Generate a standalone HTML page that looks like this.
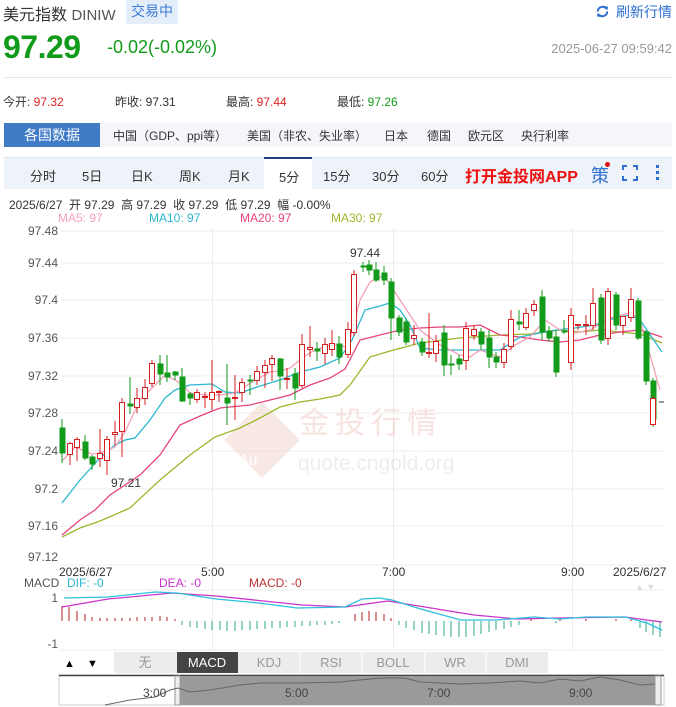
<!DOCTYPE html>
<html><head><meta charset="utf-8"><style>
*{margin:0;padding:0;box-sizing:border-box}
body{width:676px;height:707px;background:#fff;font-family:"Liberation Sans","Noto Sans CJK SC",sans-serif;position:relative;overflow:hidden;color:#333}
.a{position:absolute;white-space:nowrap}
</style></head><body>
<div class="a" style="left:3px;top:1px;font-size:16px;color:#333">美元指数 <span style="font-size:15px;color:#555">DINIW</span></div>
<div class="a" style="left:126px;top:0;width:52px;height:24px;background:#e4eefa;color:#3a7bd5;font-size:14px;line-height:22px;text-align:center">交易中</div>
<svg class="a" style="left:595px;top:4px" width="15" height="15" viewBox="0 0 16 16"><path d="M3 8a5 5 0 0 1 9-3" stroke="#2f6fcf" stroke-width="2.2" fill="none"/><path d="M13 8a5 5 0 0 1-9 3" stroke="#2f6fcf" stroke-width="2.2" fill="none"/><path d="M10 2l4 1-1 4z" fill="#2f6fcf"/><path d="M6 14l-4-1 1-4z" fill="#2f6fcf"/></svg>
<div class="a" style="left:616px;top:2px;font-size:14px;color:#2f6fcf">刷新行情</div>
<div class="a" style="left:3px;top:29px;font-size:32px;font-weight:bold;color:#129a1a;letter-spacing:-0.5px">97.29</div>
<div class="a" style="left:107px;top:37px;font-size:18px;color:#129a1a">-0.02(-0.02%)</div>
<div class="a" style="right:4px;top:41px;font-size:13px;color:#999">2025-06-27 09:59:42</div>
<div class="a" style="left:4px;top:77px;width:668px;height:1px;background:#e5e5e5"></div>
<div class="a" style="left:3px;top:93px;font-size:12px;color:#333">今开: <span style="color:#e02020">97.32</span></div>
<div class="a" style="left:115px;top:93px;font-size:12px;color:#333">昨收: 97.31</div>
<div class="a" style="left:226px;top:93px;font-size:12px;color:#333">最高: <span style="color:#e02020">97.44</span></div>
<div class="a" style="left:337px;top:93px;font-size:12px;color:#333">最低: <span style="color:#129a1a">97.26</span></div>
<div class="a" style="left:4px;top:123px;width:668px;height:24px;background:#f4f6f9"></div>
<div class="a" style="left:4px;top:123px;width:96px;height:24px;background:#3f7bc6;color:#fff;font-size:14px;line-height:24px;text-align:center">各国数据</div>
<div class="a" style="left:113px;top:127px;font-size:12px;color:#333">中国（GDP、ppi等）</div>
<div class="a" style="left:247px;top:127px;font-size:12px;color:#333">美国（非农、失业率）</div>
<div class="a" style="left:384px;top:127px;font-size:12px;color:#333">日本</div>
<div class="a" style="left:427px;top:127px;font-size:12px;color:#333">德国</div>
<div class="a" style="left:468px;top:127px;font-size:12px;color:#333">欧元区</div>
<div class="a" style="left:521px;top:127px;font-size:12px;color:#333">央行利率</div>
<div class="a" style="left:4px;top:157px;width:668px;height:32px;background:#eef3fa;border-top:1px solid #dde6f2"></div>
<div class="a" style="left:264px;top:157px;width:48px;height:33px;background:#fff;border-top:2px solid #1f3f7a"></div>
<div class="a" style="left:0;top:166px;font-size:13px;color:#333;width:676px">
<span class="a" style="left:30px">分时</span><span class="a" style="left:82px">5日</span><span class="a" style="left:131px">日K</span><span class="a" style="left:179px">周K</span><span class="a" style="left:228px">月K</span><span class="a" style="left:279px;top:1px">5分</span><span class="a" style="left:323px">15分</span><span class="a" style="left:372px">30分</span><span class="a" style="left:421px">60分</span></div>
<div class="a" style="left:465px;top:163px;font-size:16px;font-weight:bold;color:#f01010">打开金投网APP</div>
<div class="a" style="left:591px;top:162px;font-size:18px;color:#2f6fcf">策</div>
<div class="a" style="left:605px;top:162px;width:5px;height:5px;border-radius:50%;background:#e01010"></div>
<svg class="a" style="left:622px;top:165px" width="16" height="16"><path d="M1 5V1h4M11 1h4v4M15 11v4h-4M5 15H1v-4" stroke="#2f6fcf" stroke-width="2" fill="none"/></svg>
<div class="a" style="left:656px;top:165px;width:3px;height:3px;background:#2f6fcf;box-shadow:0 6px 0 #2f6fcf,0 12px 0 #2f6fcf"></div>
<div class="a" style="left:9px;top:196px;font-size:12px;color:#333">2025/6/27 &nbsp;开 97.29 &nbsp;高 97.29 &nbsp;收 97.29 &nbsp;低 97.29 &nbsp;幅 -0.00%</div>
<div class="a" style="left:58px;top:211px;font-size:12px;color:#f4a0b8">MA5: 97</div>
<div class="a" style="left:149px;top:211px;font-size:12px;color:#2cb8cf">MA10: 97</div>
<div class="a" style="left:240px;top:211px;font-size:12px;color:#e8447a">MA20: 97</div>
<div class="a" style="left:331px;top:211px;font-size:12px;color:#9cb82c">MA30: 97</div>

<svg class="a" style="left:0;top:0" width="676" height="707" font-family="Liberation Sans, sans-serif">
<g stroke="#ececec" stroke-width="1">
<line x1="60" y1="231" x2="664" y2="231"/><line x1="60" y1="263" x2="664" y2="263"/><line x1="60" y1="300" x2="664" y2="300"/><line x1="60" y1="338" x2="664" y2="338"/><line x1="60" y1="376" x2="664" y2="376"/><line x1="60" y1="413" x2="664" y2="413"/><line x1="60" y1="451" x2="664" y2="451"/><line x1="60" y1="489" x2="664" y2="489"/><line x1="60" y1="526" x2="664" y2="526"/><line x1="60" y1="565" x2="664" y2="565"/>
<line x1="212.5" y1="228" x2="212.5" y2="650"/><line x1="393.5" y1="228" x2="393.5" y2="650"/><line x1="572.5" y1="228" x2="572.5" y2="650"/>
<line x1="60" y1="590" x2="664" y2="590"/><line x1="60" y1="650" x2="664" y2="650"/>
</g>
<g font-size="12" fill="#555" text-anchor="end">
<text x="58" y="235">97.48</text><text x="58" y="267">97.44</text><text x="58" y="304">97.4</text><text x="58" y="342">97.36</text><text x="58" y="380">97.32</text><text x="58" y="417">97.28</text><text x="58" y="455">97.24</text><text x="58" y="493">97.2</text><text x="58" y="530">97.16</text><text x="58" y="561">97.12</text>
</g>
<!-- watermark -->
<g opacity="0.5">
<path d="M262 402 L300 440 L262 478 L224 440 Z" fill="#f2d4cc"/>
<text x="238" y="465" font-size="16" fill="#fff">Au</text>
<text x="299" y="433" font-size="30" fill="#f0c8c0" font-family="Noto Sans CJK SC, sans-serif" letter-spacing="6">金投行情</text>
<text x="298" y="470" font-size="21" fill="#dcdcdc">quote.cngold.org</text>
</g>
<!-- MAs -->
<g fill="none" stroke-width="1.3">
<polyline stroke="#9cb82c" points="62,537 80,528 100,521 130,508 160,480 190,455 215,437 240,428 260,418 280,407 300,402 320,399 340,395 350,385 370,357 390,351 420,343 460,338 500,335 530,334 560,330 580,332 600,330 620,332 640,334 662,343"/>
<polyline stroke="#e8447a" points="62,535 80,520 95,510 110,495 140,475 160,455 180,425 200,416 220,408 250,405 270,400 290,395 310,385 330,378 345,369 360,340 380,335 400,330 420,328 440,327 460,327 480,325 500,335 520,337 540,340 560,342 580,340 600,335 620,332 640,330 662,337"/>
<polyline stroke="#2cb8cf" points="62,503 80,480 100,458 115,445 125,440 135,438 150,420 165,398 175,390 190,385 212,384 225,392 240,393 260,386 280,380 300,372 320,367 340,358 352,340 365,310 380,306 390,303 400,310 410,325 420,348 440,350 460,350 480,350 500,350 520,337 540,333 556,330 575,328 595,325 615,318 630,315 640,320 662,352"/>
<polyline stroke="#f4a0b8" points="62,461 75,447 92,454 100,453 115,447 125,432 140,400 150,390 165,375 175,380 183,385 190,393 205,395 220,395 235,393 255,380 270,372 280,371 290,368 305,356 315,350 330,345 340,345 348,348 360,300 370,282 384,275 400,300 420,330 440,345 460,355 470,357 480,350 500,357 515,345 530,337 545,320 560,330 575,333 590,330 610,318 630,313 640,320 660,390"/>
</g>
<!-- candles: green -->
<g stroke="#129a1a" fill="#129a1a">
<path d="M62 419V463M85 435V460M92 455V470M130 377V414M160 355V385M167 355V382M175 371V380M182 368V402M190 392V405M227 364V425M250 375V395M280 358V390M295 368V400M317 342V361M339 336V364M363 262V272M369 260V275M376 262V282M384 266V285M391 278V340M399 315V336M406 318V345M422 338V356M444 325V376M451 355V375M459 355V370M481 328V350M489 330V368M496 352V368M519 310V330M542 290V340M549 326V342M556 330V377M564 320V334M601 294V344M616 292V330M638 298V340M646 330V385M653 378V427"/>
<rect x="60" y="428" width="5" height="25"/><rect x="83" y="442" width="5" height="16"/><rect x="90" y="457" width="5" height="7"/><rect x="128" y="404" width="5" height="2"/><rect x="158" y="364" width="5" height="10"/><rect x="165" y="373" width="5" height="4"/><rect x="173" y="372" width="5" height="3"/><rect x="180" y="377" width="5" height="24"/><rect x="188" y="394" width="5" height="4"/><rect x="225" y="398" width="5" height="5"/><rect x="248" y="380" width="5" height="1"/><rect x="278" y="359" width="5" height="17"/><rect x="293" y="374" width="5" height="14"/><rect x="315" y="349" width="5" height="2"/><rect x="337" y="344" width="5" height="13"/><rect x="361" y="266" width="5" height="1"/><rect x="367" y="265" width="5" height="5"/><rect x="374" y="270" width="5" height="10"/><rect x="382" y="273" width="5" height="7"/><rect x="389" y="282" width="5" height="36"/><rect x="397" y="318" width="5" height="14"/><rect x="404" y="322" width="5" height="20"/><rect x="420" y="342" width="5" height="10"/><rect x="442" y="333" width="5" height="32"/><rect x="449" y="364" width="5" height="1"/><rect x="457" y="359" width="5" height="5"/><rect x="479" y="332" width="5" height="12"/><rect x="487" y="338" width="5" height="19"/><rect x="494" y="357" width="5" height="5"/><rect x="517" y="322" width="5" height="2"/><rect x="540" y="297" width="5" height="35"/><rect x="547" y="331" width="5" height="7"/><rect x="554" y="337" width="5" height="35"/><rect x="562" y="331" width="5" height="1"/><rect x="599" y="298" width="5" height="42"/><rect x="614" y="295" width="5" height="30"/><rect x="636" y="301" width="5" height="37"/><rect x="644" y="332" width="5" height="49"/><rect x="651" y="381" width="5" height="38"/>
</g>
<!-- red -->
<g stroke="#d42020" fill="#fff">
<path d="M70 442V465M77 437V461M100 429V467M107 436V475M115 421V445M122 398V457M137 388V413M145 379V405M152 360V387M197 389V403M205 392V408M212 360V410M219 390V402M235 375V420M242 378V402M257 366V385M265 360V388M272 355V381M287 368V389M302 334V388M310 326V357M325 338V364M332 330V356M348 322V358M354 270V336M414 325V345M429 313V358M436 335V362M466 322V370M474 325V340M504 343V368M511 310V350M526 308V330M534 300V316M571 308V370M578 325V330M586 315V335M593 288V330M608 288V345M623 318V335M631 288V322M653 396V426"/>
<rect x="67.5" y="443.5" width="5" height="11"/><rect x="74.5" y="439.5" width="5" height="8"/><rect x="97.5" y="453.5" width="5" height="5"/><rect x="104.5" y="439.5" width="5" height="21"/><rect x="112.5" y="432.5" width="5" height="2"/><rect x="119.5" y="402.5" width="5" height="29"/><rect x="134.5" y="398.5" width="5" height="9"/><rect x="142.5" y="387.5" width="5" height="11"/><rect x="149.5" y="363.5" width="5" height="20"/><rect x="194.5" y="392.5" width="5" height="7"/><rect x="202.5" y="396.5" width="5" height="1"/><rect x="209.5" y="392.5" width="5" height="7"/><rect x="216.5" y="391.5" width="5" height="1"/><rect x="232.5" y="397.5" width="5" height="1"/><rect x="239.5" y="382.5" width="5" height="10"/><rect x="254.5" y="371.5" width="5" height="9"/><rect x="262.5" y="365.5" width="5" height="7"/><rect x="269.5" y="358.5" width="5" height="6"/><rect x="284.5" y="378.5" width="5" height="1"/><rect x="299.5" y="344.5" width="5" height="41"/><rect x="307.5" y="347.5" width="5" height="2"/><rect x="322.5" y="344.5" width="5" height="9"/><rect x="329.5" y="343.5" width="5" height="6"/><rect x="345.5" y="329.5" width="5" height="25"/><rect x="351.5" y="274.5" width="5" height="58"/><rect x="411.5" y="335.5" width="5" height="3"/><rect x="426.5" y="352.5" width="5" height="1"/><rect x="433.5" y="341.5" width="5" height="12"/><rect x="463.5" y="328.5" width="5" height="32"/><rect x="471.5" y="329.5" width="5" height="6"/><rect x="501.5" y="349.5" width="5" height="13"/><rect x="508.5" y="319.5" width="5" height="27"/><rect x="523.5" y="313.5" width="5" height="14"/><rect x="531.5" y="304.5" width="5" height="6"/><rect x="568.5" y="315.5" width="5" height="47"/><rect x="575.5" y="324.5" width="5" height="1"/><rect x="583.5" y="324.5" width="5" height="1"/><rect x="590.5" y="303.5" width="5" height="22"/><rect x="605.5" y="291.5" width="5" height="47"/><rect x="620.5" y="316.5" width="5" height="9"/><rect x="628.5" y="299.5" width="5" height="18"/><rect x="650.5" y="398.5" width="5" height="26"/>
</g>
<line x1="659" y1="402" x2="664" y2="402" stroke="#333"/>
<text x="350" y="257" font-size="12" fill="#333">97.44</text>
<text x="111" y="487" font-size="12" fill="#333">97.21</text>
<g font-size="12" fill="#333">
<text x="59" y="576">2025/6/27</text><text x="201" y="576">5:00</text><text x="382" y="576">7:00</text><text x="561" y="576">9:00</text><text x="613" y="576">2025/6/27</text>
</g>
<text x="24" y="587" font-size="12" fill="#555">MACD</text>
<text x="67" y="587" font-size="12" fill="#2cb8cf">DIF: -0</text>
<text x="159" y="587" font-size="12" fill="#cc33cc">DEA: -0</text>
<text x="249" y="587" font-size="12" fill="#c03030">MACD: -0</text>
<text x="635" y="590" font-size="9" fill="#ddd">▲ ▼</text>
<text x="58" y="602" font-size="12" fill="#555" text-anchor="end">1</text>
<text x="58" y="648" font-size="12" fill="#555" text-anchor="end">-1</text>
<!-- histogram -->
<g stroke="#b02020" stroke-width="1">
<path d="M62 606V621M69 607V621M77 611V621M85 614V621M92 617V621M100 618V621M107 618V621M115 618V621M122 618V621M130 618V621M137 617V621M145 617V621M152 617V621M160 616V621M167 617V621M175 619V621M355 614V621M362 612V621M369 611V621M376 612V621M384 614V621M391 618V621M531 619V621M560 619V621M586 619V621M616 619V621M631 619V621"/>
</g>
<g stroke="#2aa888" stroke-width="1">
<path d="M182 621V625M190 621V627M197 621V628M205 621V629M212 621V630M220 621V630M227 621V631M235 621V631M242 621V630M250 621V630M257 621V629M265 621V629M272 621V628M280 621V628M287 621V627M295 621V627M302 621V626M310 621V626M317 621V625M325 621V625M332 621V624M339 621V623M399 621V625M406 621V628M414 621V630M422 621V633M429 621V634M436 621V635M444 621V636M451 621V637M459 621V637M466 621V637M474 621V636M481 621V634M489 621V632M496 621V630M504 621V629M511 621V627M519 621V625M556 621V623M640 621V628M646 621V632M653 621V635M660 621V637"/>
</g>
<polyline fill="none" stroke="#cc33cc" stroke-width="1.3" points="62,607 108,599 172,593 216,596 302,605 345,607 388,601 431,608 474,615 517,619 560,618 625,617 662,622"/>
<polyline fill="none" stroke="#2cc0dc" stroke-width="1.3" points="64,598 108,597 155,592 177,593 216,599 259,603 297,608 345,607 362,599 379,598 392,600 414,607 435,613 461,620 496,620 534,617 560,619 586,617 625,617 647,623 662,630"/>
<!-- buttons -->
<rect x="59" y="652" width="55" height="21" fill="#fff"/>
<text x="64" y="667" font-size="11" fill="#000">▲</text><text x="87" y="667" font-size="11" fill="#000">▼</text>
<g font-size="13" text-anchor="middle">
<rect x="114" y="652" width="434" height="21" fill="#ececec"/>
<rect x="177" y="652" width="61" height="21" fill="#444"/>
<g stroke="#fff"><line x1="300" y1="652" x2="300" y2="673"/><line x1="362" y1="652" x2="362" y2="673"/><line x1="425" y1="652" x2="425" y2="673"/><line x1="486" y1="652" x2="486" y2="673"/></g>
<text x="145" y="667" fill="#999" font-family="Noto Sans CJK SC, sans-serif">无</text>
<text x="207" y="667" fill="#fff">MACD</text><text x="269" y="667" fill="#999">KDJ</text><text x="331" y="667" fill="#999">RSI</text><text x="393" y="667" fill="#999">BOLL</text><text x="455" y="667" fill="#999">WR</text><text x="517" y="667" fill="#999">DMI</text>
</g>
<!-- navigator -->
<rect x="59" y="675" width="605" height="30" fill="#fff" stroke="#ccc"/>
<line x1="59" y1="675.5" x2="664" y2="675.5" stroke="#444" stroke-width="1.5"/>
<rect x="178" y="676" width="479" height="29" fill="#9a9a9a"/>
<rect x="175" y="676" width="5" height="29" fill="#eee" stroke="#999"/>
<rect x="655" y="676" width="6" height="29" fill="#eee" stroke="#999"/>
<polyline fill="none" stroke="#666" points="105,705 130,700 155,697 170,690 178,688 190,692 210,690 240,685 260,683 300,683 340,682 360,680 380,678 405,678 420,682 460,684 490,683 520,681 540,683 560,679 580,681 600,677 620,680 640,685 655,684"/>
<g font-size="12" fill="#444"><text x="143" y="697">3:00</text><text x="285" y="697">5:00</text><text x="427" y="697">7:00</text><text x="569" y="697">9:00</text></g>
</svg>
</body></html>
